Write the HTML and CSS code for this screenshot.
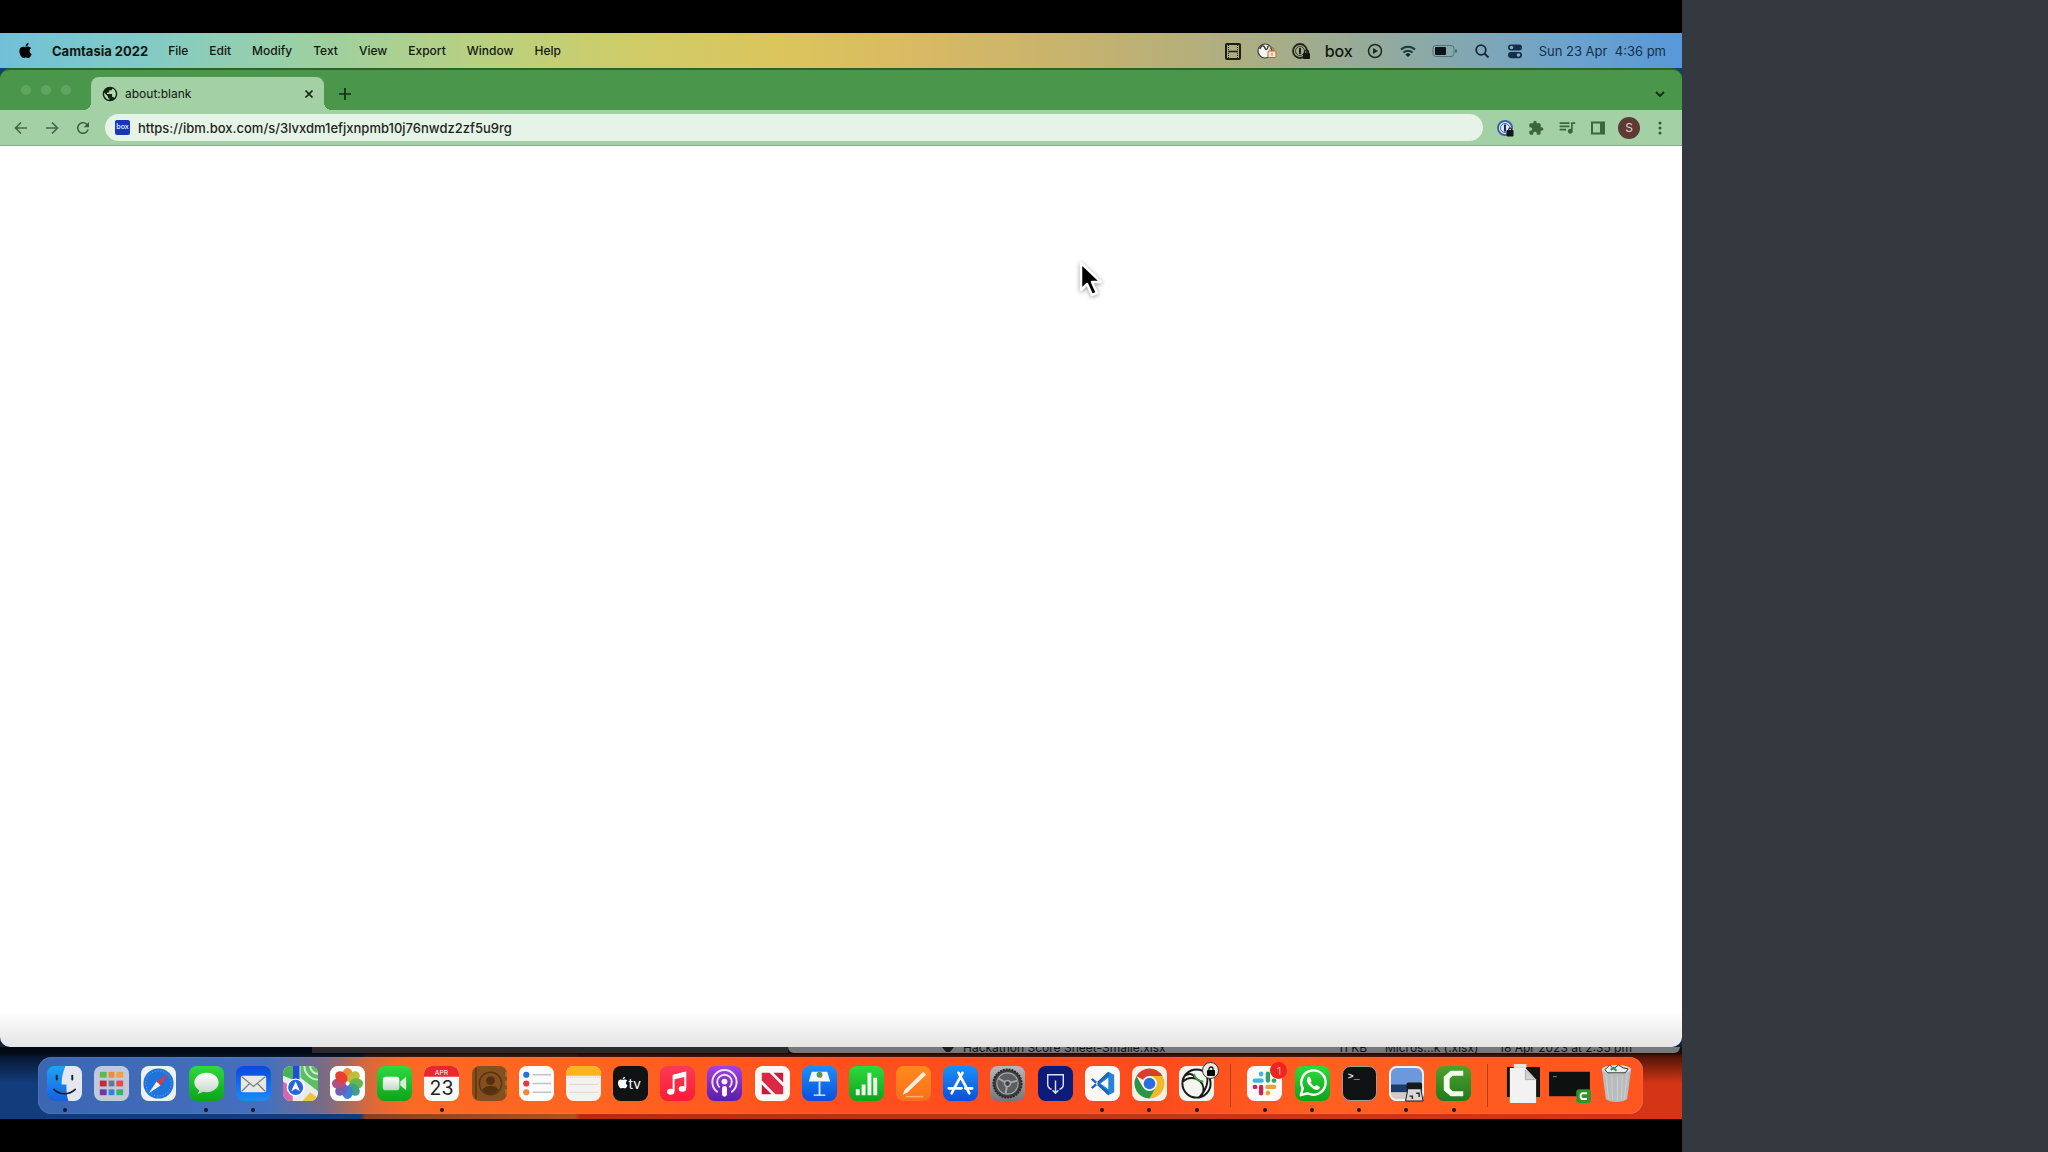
FILE: index.html
```
<!DOCTYPE html>
<html lang="en">
<head>
  <meta charset="UTF-8">
  <title>about:blank</title>
  <link rel="stylesheet" href="styles.css">
</head>
<body>
<svg class="defs" aria-hidden="true">
  <symbol id="apple" viewBox="0 0 24 24">
    <path d="M12.152 6.896c-.948 0-2.415-1.078-3.96-1.04-2.04.027-3.91 1.183-4.961 3.014-2.117 3.675-.546 9.103 1.519 12.09 1.013 1.454 2.208 3.09 3.792 3.039 1.52-.065 2.09-.987 3.935-.987 1.831 0 2.35.987 3.96.948 1.637-.026 2.676-1.48 3.676-2.948 1.156-1.688 1.636-3.325 1.662-3.415-.039-.013-3.182-1.221-3.22-4.857-.026-3.04 2.48-4.494 2.597-4.559-1.429-2.09-3.623-2.324-4.39-2.376-2-.156-3.675 1.09-4.61 1.09zM15.53 3.83c.843-1.012 1.4-2.427 1.245-3.83-1.207.052-2.662.805-3.532 1.818-.78.896-1.454 2.338-1.273 3.714 1.338.104 2.715-.688 3.559-1.701"/>
  </symbol>
  <linearGradient id="g-finder" x2="0" y2="1"><stop stop-color="#1fa4f4"/><stop offset="1" stop-color="#1560e0"/></linearGradient>
  <linearGradient id="g-green" x2="0" y2="1"><stop stop-color="#2fd93e"/><stop offset="1" stop-color="#0ba51a"/></linearGradient>
  <linearGradient id="g-blue" x2="0" y2="1"><stop stop-color="#0a48e0"/><stop offset="1" stop-color="#1c8cf4"/></linearGradient>
  <linearGradient id="g-blue2" x2="0" y2="1"><stop stop-color="#1a90f8"/><stop offset="1" stop-color="#0a50dc"/></linearGradient>
  <linearGradient id="g-red" x2="0" y2="1"><stop stop-color="#fb3a54"/><stop offset="1" stop-color="#f81c38"/></linearGradient>
  <linearGradient id="g-purple" x2="0" y2="1"><stop stop-color="#a044dc"/><stop offset="1" stop-color="#5a1cae"/></linearGradient>
  <linearGradient id="g-orange" x2="0" y2="1"><stop stop-color="#ff8a1c"/><stop offset="1" stop-color="#f8701a"/></linearGradient>
  <linearGradient id="g-grey" x2="0" y2="1"><stop stop-color="#b8b8b4"/><stop offset="1" stop-color="#77777a"/></linearGradient>
  <linearGradient id="g-camtasia" x2="0" y2="1"><stop stop-color="#52a02c"/><stop offset="1" stop-color="#1f7a1c"/></linearGradient>
  <linearGradient id="g-white" x2="0" y2="1"><stop stop-color="#ffffff"/><stop offset="1" stop-color="#c4d6c8"/></linearGradient>
  <clipPath id="tile"><rect width="36" height="36" rx="8"/></clipPath>
</svg>

<div class="stage">
  <main class="screen">

    <header class="menubar">
      <nav class="menus">
        <button class="apple" aria-label="Apple"><svg width="15" height="15"><use href="#apple"/></svg></button>
        <button class="app-name">Camtasia 2022</button>
        <button>File</button>
        <button>Edit</button>
        <button>Modify</button>
        <button>Text</button>
        <button>View</button>
        <button>Export</button>
        <button>Window</button>
        <button>Help</button>
      </nav>
      <div class="status">
        <svg width="18" height="18" viewBox="0 0 18 18" fill="none" stroke="#1d1f12"><rect x="2" y="2" width="14" height="15" rx="1" stroke-width="2"/><path d="M4.500 3v13M13.500 3v13" stroke-dasharray="1 1"/><path d="M4 9.500h10" stroke-width="1.500"/></svg>
        <svg width="20" height="18" viewBox="0 0 20 18"><circle cx="8" cy="9" r="7" fill="#f4f4f0" stroke="#3c3c38" stroke-width="1.200"/><path d="M3 7c1-4 4-4 5-1s3 1 3-2" fill="none" stroke="#3c3c38" stroke-width="1.500"/><rect x="11" y="9" width="8" height="6.500" rx="1" fill="#f4e4d0" stroke="#b8643c"/><path d="M13 9V7.500a2 2 0 0 1 4 0V9M15 11v2.500" fill="none" stroke="#b8643c"/></svg>
        <svg width="18" height="18" viewBox="0 0 18 18"><circle cx="8" cy="9" r="7" fill="none" stroke="#20241c" stroke-width="1.800"/><circle cx="8" cy="9" r="4.500" fill="none" stroke="#20241c" stroke-width=".8"/><path d="M8 6v6" stroke="#20241c" stroke-width="2"/><rect x="11" y="11" width="7" height="6" rx="1" fill="#14160f"/><path d="M12.500 11.500V10a2 2 0 0 1 4 0v1.500" fill="none" stroke="#14160f" stroke-width="1.200"/></svg>
        <span class="box-word">box</span>
        <svg width="18" height="18" viewBox="0 0 18 18"><circle cx="9" cy="9" r="6.500" fill="none" stroke="#20281f" stroke-width="1.500"/><path d="M7 6l5 3-5 3z" fill="#20281f"/></svg>
        <svg width="18" height="18" viewBox="0 0 18 18" fill="none" stroke="#1c3a3e" stroke-width="2"><path d="M2 7.500a10 10 0 0 1 14 0M4.500 10.500a6.500 6.500 0 0 1 9 0"/><path d="M9 15l-2.500-2.500a3.500 3.500 0 0 1 5 0z" fill="#0c1a1c" stroke="none"/></svg>
        <svg width="26" height="18" viewBox="0 0 26 18"><rect x="1" y="3.500" width="21" height="11" rx="3" fill="none" stroke="#54707a"/><rect x="3" y="5" width="11" height="8" rx="1" fill="#0c1418"/><path d="M24 7.500v3" stroke="#38505c" stroke-width="1.500"/></svg>
        <svg width="18" height="18" viewBox="0 0 18 18" fill="none" stroke="#14283a" stroke-width="1.800"><circle cx="8" cy="8" r="4.800"/><path d="M11.500 11.500L15.500 15.500"/></svg>
        <svg width="18" height="18" viewBox="0 0 18 18"><rect x="2" y="2.500" width="14" height="6" rx="3" fill="#12304a"/><circle cx="5.500" cy="5.500" r="1.800" fill="#7ea8c8"/><rect x="2.600" y="10.600" width="12.800" height="5" rx="2.500" fill="#12304a" stroke="#12304a" stroke-width="1.200"/><circle cx="12.500" cy="13" r="1.800" fill="#7ea8c8"/></svg>
        <time class="clock">Sun 23 Apr&nbsp; 4:36 pm</time>
      </div>
    </header>

    <section class="browser">
      <div class="tabstrip">
        <div class="lights"><i></i><i></i><i></i></div>
        <div class="tab">
          <svg width="16" height="16" viewBox="1 1 22 22"><circle cx="12" cy="12" r="9" fill="#b4dcb4"/><path fill="#10240f" d="M12 2C6.480 2 2 6.480 2 12s4.480 10 10 10 10-4.480 10-10S17.520 2 12 2zm-1 17.930c-3.950-.49-7-3.850-7-7.930 0-.62.08-1.210.21-1.790L9 15v1c0 1.100.9 2 2 2v1.930zm6.900-2.540c-.26-.81-1-1.390-1.900-1.390h-1v-3c0-.55-.45-1-1-1H8v-2h2c.55 0 1-.45 1-1V7h2c1.100 0 2-.9 2-2v-.41c2.930 1.190 5 4.060 5 7.410 0 2.080-.8 3.970-2.100 5.390z"/></svg>
          <span class="tab-title">about:blank</span>
          <button aria-label="Close tab"><svg width="10" height="10" viewBox="0 0 10 10"><path d="M1.500 1.500l7 7M8.500 1.500l-7 7" stroke="#12240f" stroke-width="1.700"/></svg></button>
        </div>
        <button class="new-tab" aria-label="New tab"><svg width="14" height="14" viewBox="0 0 14 14"><path d="M7 1v12M1 7h12" stroke="#102c10" stroke-width="1.700"/></svg></button>
        <button class="tab-search" aria-label="Search tabs"><svg width="12" height="12" viewBox="0 0 12 12"><path d="M2 4l4 4 4-4" fill="none" stroke="#102c10" stroke-width="1.800"/></svg></button>
      </div>

      <div class="toolbar">
        <button aria-label="Back"><svg width="18" height="18" viewBox="0 0 18 18"><path d="M15 9H4M9 3.500L3.500 9 9 14.500" fill="none" stroke="#45684a" stroke-width="1.700"/></svg></button>
        <button aria-label="Forward"><svg width="18" height="18" viewBox="0 0 18 18"><path d="M3 9h11M9 3.500l5.500 5.500L9 14.500" fill="none" stroke="#45684a" stroke-width="1.700"/></svg></button>
        <button aria-label="Reload"><svg width="18" height="18" viewBox="0 0 24 24" fill="#3d5e40"><path d="M17.650 6.350A7.958 7.958 0 0 0 12 4c-4.420 0-7.990 3.580-7.990 8s3.570 8 7.990 8c3.730 0 6.840-2.550 7.730-6h-2.080A5.990 5.990 0 0 1 12 18c-3.310 0-6-2.690-6-6s2.690-6 6-6c1.660 0 3.140.69 4.220 1.780L13 11h7V4l-2.350 2.350z"/></svg></button>
        <label class="omnibox">
          <span class="favicon">box</span>
          <input type="text" value="https://ibm.box.com/s/3lvxdm1efjxnpmb10j76nwdz2zf5u9rg" aria-label="Address" spellcheck="false">
        </label>
        <button aria-label="1Password"><svg width="18" height="18" viewBox="0 0 18 18"><circle cx="9" cy="9" r="7" fill="#eef4fc" stroke="#3c62a8" stroke-width="2"/><circle cx="9" cy="9" r="4.500" fill="none" stroke="#3c62a8"/><path d="M9 5.500v7" stroke="#1c2c54" stroke-width="2.200"/><rect x="10.500" y="11" width="7" height="6.500" rx="1" fill="#10141c"/><path d="M12.500 12v-1.500a1.500 1.500 0 0 1 3 0V12" fill="none" stroke="#10141c"/></svg></button>
        <button aria-label="Extensions"><svg width="16" height="16" viewBox="0 0 24 24" fill="#3f6440"><path d="M20.500 11H19V7c0-1.100-.9-2-2-2h-4V3.500C13 2.120 11.880 1 10.500 1S8 2.120 8 3.500V5H4c-1.100 0-1.990.9-1.990 2v3.800H3.500c1.490 0 2.700 1.210 2.700 2.700s-1.210 2.700-2.700 2.700H2V20c0 1.100.9 2 2 2h3.800v-1.500c0-1.490 1.210-2.700 2.700-2.700 1.490 0 2.700 1.210 2.700 2.700V22H17c1.100 0 2-.9 2-2v-4h1.500c1.380 0 2.500-1.120 2.500-2.500S21.880 11 20.500 11z"/></svg></button>
        <button aria-label="Media controls"><svg width="18" height="18" viewBox="1 2 22 22" fill="#3f6440"><path d="M15 6H3v2h12V6zm0 4H3v2h12v-2zM3 16h8v-2H3v2zM17 6v8.180c-.31-.11-.65-.18-1-.18-1.660 0-3 1.340-3 3s1.340 3 3 3 3-1.340 3-3V8h3V6h-5z"/></svg></button>
        <button aria-label="Side panel"><svg width="18" height="18" viewBox="0 0 18 18"><path d="M3 3.500h12v11H3z" fill="none" stroke="#3f6440" stroke-width="2"/><path d="M11 3h4v12h-4z" fill="#3f6440"/></svg></button>
        <button class="avatar" aria-label="Profile">S</button>
        <button aria-label="Menu"><svg width="18" height="18" viewBox="0 0 18 18" fill="#36593a"><circle cx="9" cy="4" r="1.500"/><circle cx="9" cy="9" r="1.500"/><circle cx="9" cy="14" r="1.500"/></svg></button>
      </div>

      <div class="page">
        <svg class="cursor" width="28" height="40" viewBox="0 0 28 40"><path d="M4 3v27l6-6 5 11 5-2-5-11h9z" fill="#000" stroke="#fff" stroke-width="2.500" stroke-linejoin="round"/></svg>
      </div>
    </section>

    <div class="desktop">
      <!-- edges of the windows behind the browser -->
      <div class="behind">
        <div class="dark-window"></div>
        <div class="finder-window">
          <svg width="12" height="6" viewBox="0 0 12 6"><path d="M0 0h12L8 5H4z" fill="#1c1c1c"/></svg>
          <span class="file-name">Hackathon Score Sheet-Smalle.xlsx</span>
          <span class="file-size">11 KB</span>
          <span class="file-kind">Micros...k (.xlsx)</span>
          <span class="file-date">18 Apr 2023 at 2:35 pm</span>
        </div>
      </div>

      <nav class="dock">
        <button class="running" aria-label="Finder"><svg viewBox="0 0 36 36"><g clip-path="url(#tile)"><path fill="url(#g-finder)" d="M0 0h36v36H0z"/><path d="M19 0c-3 7-4 13-4 19h5c0 6 0 11 2 17h14V0z" fill="#e4e8ee"/></g><path d="M10 10v4M26 10v4" stroke="#10202c" stroke-width="2" stroke-linecap="round"/><path d="M7 24c6 6 16 6 22 0" fill="none" stroke="#10202c" stroke-width="1.600" stroke-linecap="round"/></svg></button>
        <button aria-label="Launchpad"><svg viewBox="0 0 36 36"><rect width="36" height="36" rx="8" fill="#c3c9dc"/><path fill="#5cba4c" d="M6 6h7v6H6z"/><path fill="#f08c34" d="M15 6h6v6h-6z"/><path fill="#f0a03c" d="M23 6h7v6h-7z"/><path fill="#c02c38" d="M6 15h7v6H6z"/><path fill="#5c7c94" d="M15 15h6v6h-6z"/><path fill="#e84848" d="M23 15h7v6h-7z"/><path fill="#6c38a8" d="M6 24h7v6H6z"/><path fill="#2c84dc" d="M15 24h6v6h-6z"/><path fill="#38b070" d="M23 24h7v6h-7z"/></svg></button>
        <button aria-label="Safari"><svg viewBox="0 0 36 36"><rect width="36" height="36" rx="8" fill="#eef0f4"/><circle cx="18" cy="18" r="15.500" fill="#1f74dc"/><circle cx="18" cy="18" r="13" fill="none" stroke="#7cb8f0" stroke-dasharray="1 2"/><path d="M28 8L16 16l4 4z" fill="#e4343c"/><path d="M8 28l8-12 4 4z" fill="#f4f4f4"/></svg></button>
        <button class="running" aria-label="Messages"><svg viewBox="0 0 36 36"><rect width="36" height="36" rx="8" fill="url(#g-green)"/><path d="M18 7c-7 0-12.500 4.500-12.500 10 0 3.500 2 6 5 8 0 1.500-1 2.500-2 3.500 2.500 0 4-1 5.500-2 1.300.3 2.600.5 4 .5 7 0 12.500-4.500 12.500-10S25 7 18 7z" fill="url(#g-white)"/></svg></button>
        <button class="running" aria-label="Mail"><svg viewBox="0 0 36 36"><rect width="36" height="36" rx="8" fill="url(#g-blue)"/><rect x="5" y="10" width="26" height="17" rx="2" fill="#e8e8e6"/><path d="M6 11l12 10 12-10M6 26l8-8M30 26l-8-8" fill="none" stroke="#7c8084" stroke-width="1.300"/></svg></button>
        <button aria-label="Maps"><svg viewBox="0 0 36 36"><g clip-path="url(#tile)"><path fill="#e8ece8" d="M0 0h36v36H0z"/><path d="M18 0h18v26L18 12z" fill="#58c060"/><path d="M0 0h10v14L0 10z" fill="#46b454"/><path d="M22 0a14 14 0 0 0 14 14M28 0a8 8 0 0 0 8 8" fill="none" stroke="#d4ecd4" stroke-width="2"/><path d="M0 16l10 6v14H0z" fill="#d468b0"/><path d="M20 36l8-9 8 6v3z" fill="#ecc440"/><path d="M10 0h7v18h-7z" fill="#1c50cc"/></g><circle cx="13" cy="22" r="8.500" fill="#2466dc" stroke="#fff" stroke-width="1.500"/><path d="M13 16l4.500 10-4.500-2.500L8.500 26z" fill="#fff"/></svg></button>
        <button aria-label="Photos"><svg viewBox="0 0 36 36"><rect width="36" height="36" rx="8" fill="#fff"/><g transform="translate(18 18)" opacity=".9"><ellipse cy="-9" rx="5.500" ry="7" fill="#f08020"/><ellipse cy="-9" rx="5.500" ry="7" fill="#b4b824" transform="rotate(45)"/><ellipse cy="-9" rx="5.500" ry="7" fill="#58b038" transform="rotate(90)"/><ellipse cy="-9" rx="5.500" ry="7" fill="#2c9878" transform="rotate(135)"/><ellipse cy="-9" rx="5.500" ry="7" fill="#2c70d0" transform="rotate(180)"/><ellipse cy="-9" rx="5.500" ry="7" fill="#5c50b0" transform="rotate(225)"/><ellipse cy="-9" rx="5.500" ry="7" fill="#a83c78" transform="rotate(270)"/><ellipse cy="-9" rx="5.500" ry="7" fill="#e42c20" transform="rotate(315)"/></g></svg></button>
        <button aria-label="FaceTime"><svg viewBox="0 0 36 36"><rect width="36" height="36" rx="8" fill="url(#g-green)"/><rect x="6" y="11" width="17" height="14" rx="3" fill="url(#g-white)"/><path d="M24 16l6-5v14l-6-5z" fill="#d8ecd8"/></svg></button>
        <button class="running" aria-label="Calendar"><svg viewBox="0 0 36 36"><g clip-path="url(#tile)"><path fill="#fafafa" d="M0 0h36v36H0z"/><path fill="#e8282c" d="M0 0h36v11H0z"/></g><text class="cal-month" x="18" y="9">APR</text><text class="cal-day" x="18" y="30">23</text></svg></button>
        <button aria-label="Contacts"><svg viewBox="0 0 36 36"><rect width="36" height="36" rx="8" fill="#84501f"/><path d="M4 2v32" stroke="#643a14" stroke-width="2"/><circle cx="19" cy="18" r="11.500" fill="none" stroke="#5c3410" stroke-width="1.500"/><circle cx="19" cy="15" r="4.500" fill="#553010"/><path d="M11 25c1-6 15-6 16 0-4 5-12 5-16 0z" fill="#553010"/><path d="M35 6v5M35 15v5M35 24v5" stroke="#c88c40"/></svg></button>
        <button aria-label="Reminders"><svg viewBox="0 0 36 36"><rect width="36" height="36" rx="8" fill="#fbfbfb"/><circle cx="7.500" cy="9" r="3.200" fill="#2470dc"/><circle cx="7.500" cy="18" r="3.200" fill="#dc3c48"/><circle cx="7.500" cy="27" r="3.200" fill="#f08440"/><path d="M14 9h19M14 18h19M14 27h19" stroke="#c0c2c6" stroke-width="1.300"/></svg></button>
        <button aria-label="Notes"><svg viewBox="0 0 36 36"><g clip-path="url(#tile)"><path fill="#f4f2ee" d="M0 0h36v36H0z"/><path fill="#fcb41c" d="M0 0h36v10H0z"/><path d="M0 11.500h36" stroke="#d4cfc4" stroke-dasharray="1 1"/><path d="M3 19h30M3 27h30" stroke="#d8d8d6"/></g></svg></button>
        <button aria-label="TV"><svg viewBox="0 0 36 36"><rect width="36" height="36" rx="8" fill="#111214"/><use href="#apple" x="4" y="10" width="12" height="14" fill="#fff"/><text class="tv-word" x="16" y="24">tv</text></svg></button>
        <button aria-label="Music"><svg viewBox="0 0 36 36"><rect width="36" height="36" rx="8" fill="url(#g-red)"/><path d="M14 26V10l12-3v16" fill="none" stroke="#fff" stroke-width="2"/><path d="M14 9l12-3v5l-12 3z" fill="#fff"/><ellipse cx="11" cy="26.500" rx="3.800" ry="3" fill="#fff"/><ellipse cx="23" cy="23.500" rx="3.800" ry="3" fill="#fff"/></svg></button>
        <button aria-label="Podcasts"><svg viewBox="0 0 36 36"><rect width="36" height="36" rx="8" fill="url(#g-purple)"/><g fill="none" stroke="#f0e4fc" stroke-width="2"><path d="M11 27a12.500 12.500 0 1 1 14 0"/><path d="M13 22a7.500 7.500 0 1 1 10 0"/></g><circle cx="18" cy="16" r="3" fill="#fff"/><rect x="15.500" y="20.500" width="5" height="11" rx="2.500" fill="#fff"/></svg></button>
        <button aria-label="News"><svg viewBox="0 0 36 36"><rect width="36" height="36" rx="8" fill="#fdf8f6"/><path d="M7 7h8l14 14v8h-8L7 15z" fill="#dc2844"/><path d="M19 7h10v10zM7 19v10h10z" fill="#c81c3c"/></svg></button>
        <button aria-label="Keynote"><svg viewBox="0 0 36 36"><rect width="36" height="36" rx="8" fill="url(#g-blue2)"/><path d="M10 6h16l3 10H7z" fill="#f4f6fa"/><circle cx="18" cy="9" r="3" fill="#38a45c"/><path d="M18 9l3 0a3 3 0 0 1-3 3z" fill="#e85c34"/><path d="M18 16v14" stroke="#d4e0f4" stroke-width="2"/><path d="M12 30h12" stroke="#d4e0f4" stroke-width="1.500"/></svg></button>
        <button aria-label="Numbers"><svg viewBox="0 0 36 36"><rect width="36" height="36" rx="8" fill="url(#g-green)"/><path d="M7 24h4v6H7zM13 19h4v11h-4zM19 7h4v23h-4zM25 12h4v18h-4z" fill="#f0fcf0"/></svg></button>
        <button aria-label="Pages"><svg viewBox="0 0 36 36"><rect width="36" height="36" rx="8" fill="url(#g-orange)"/><path d="M28 6l3 3-19 18-5 2.500 2-5z" fill="#fbeee0"/><path d="M10 31.500h18" stroke="#fcb078" stroke-width="1.500"/></svg></button>
        <button aria-label="App Store"><svg viewBox="0 0 36 36"><rect width="36" height="36" rx="8" fill="url(#g-blue2)"/><path d="M20 7L9 28M16 7l11 21M6 23h13M23 23h7" fill="none" stroke="#fff" stroke-width="2.800" stroke-linecap="round"/></svg></button>
        <button aria-label="System Settings"><svg viewBox="0 0 36 36"><rect width="36" height="36" rx="8" fill="url(#g-grey)"/><circle cx="18" cy="18" r="14.500" fill="#3c3e42" stroke="#26282a" stroke-width="2" stroke-dasharray="2 1"/><circle cx="18" cy="18" r="11" fill="#5c5e62" stroke="#a4a6a8" stroke-width="1.200"/><path d="M18 18L9 13M18 18l10-3M18 18l-2 10" stroke="#a4a6a8" stroke-width="2"/><circle cx="18" cy="18" r="3" fill="#3c3e42" stroke="#a4a6a8" stroke-width="1.500"/></svg></button>
        <button aria-label="Guard"><svg viewBox="0 0 36 36"><rect width="36" height="36" rx="8" fill="#0c1a78"/><path d="M14 24c-3-1-4-2-4-5V9h16v10c0 3-1 4-4 5M18 15v13M15 25l3 3 3-3" fill="none" stroke="#dce0f8" stroke-width="1.500"/></svg></button>
        <button class="running" aria-label="Visual Studio Code"><svg viewBox="0 0 36 36"><rect width="36" height="36" rx="8" fill="#fdf8f4"/><path d="M24 6l6 3v18l-6 3-12-12z" fill="#2484d8"/><path d="M24 12v12l-8-6z" fill="#fdf8f4"/><path d="M6 14l2-1.500L25 27l-1 3zM6 22l2 1.500L25 9l-1-3z" fill="#1c64b8"/></svg></button>
        <button class="running" aria-label="Google Chrome"><svg viewBox="0 0 36 36"><rect width="36" height="36" rx="8" fill="#f6efe2"/><path d="M18 18L4.600 10.300A15.500 15.500 0 0 1 31.400 10.300L18 10.300z" fill="#dc3c30"/><path d="M18 10.300h13.400A15.500 15.500 0 0 1 18 33.500L24.700 21.800z" fill="#f4b828"/><path d="M4.600 10.300A15.500 15.500 0 0 0 18 33.500l6.700-11.700H11.300z" fill="#2c9448"/><circle cx="18" cy="18" r="7.700" fill="#f8f8f4"/><circle cx="18" cy="18" r="6" fill="#2c6ce4"/></svg></button>
        <button class="running" aria-label="Cisco Secure Client"><svg viewBox="0 0 36 36"><rect width="36" height="36" rx="8" fill="#f6f4ee"/><g fill="none" stroke="#181a18" stroke-width="2"><circle cx="18" cy="18" r="14.500"/><path d="M4 16c5-5 13-5 18 0 4 4 4 10 1 15M28 8c3 8 0 17-7 24M6 10c4-3 8-2 10 1"/></g><path d="M15 8c2 5 6 8 10 8" fill="none" stroke="#3c9848" stroke-width="2"/></svg><span class="badge lock"><svg width="10" height="10" viewBox="0 0 10 10"><rect x="1" y="4" width="8" height="6" rx="1"/><path d="M3 5V3a2 2 0 0 1 4 0v2" fill="none" stroke="#111" stroke-width="1.300"/></svg></span></button>
        <hr>
        <button class="running" aria-label="Slack"><svg viewBox="0 0 36 36"><rect width="36" height="36" rx="8" fill="#fdfaf8"/><g fill="none" stroke-width="4.500" stroke-linecap="round"><path d="M8 15h7M14.500 8v.5" stroke="#38b8dc"/><path d="M21.500 8v7M28 15h-.500" stroke="#2ca470"/><path d="M28 21.500h-7M21.500 28v-.500" stroke="#e8a434"/><path d="M14.500 28v-6.500M8 21.500h.5" stroke="#cc2450"/></g></svg><span class="badge count">1</span></button>
        <button class="running" aria-label="WhatsApp"><svg viewBox="0 0 36 36"><rect width="36" height="36" rx="8" fill="url(#g-green)"/><path d="M6 30l2-7a12.500 12.500 0 1 1 5 5z" fill="none" stroke="#fff" stroke-width="2.500" stroke-linejoin="round"/><path d="M14 11c-3 2-2 6 1.500 9.500S23 26 25 23.500c1-1.500.6-2-.4-2.600l-2.200-1.100c-.8-.3-1 .1-1.900 1.200-2-.8-3.600-2.300-4.500-4.200.9-.9 1.200-1.300.8-2.200l-1-2.400c-.4-.9-.8-1.400-1.800-1.200z" fill="#fff"/></svg></button>
        <button class="running" aria-label="Terminal"><svg viewBox="0 0 36 36"><rect x=".5" y=".5" width="35" height="35" rx="8" fill="#111214" stroke="#a8a09c"/><text class="prompt" x="6" y="13">&gt;_</text></svg></button>
        <button class="running" aria-label="Preview"><svg viewBox="0 0 36 36"><g clip-path="url(#tile)"><path fill="#6c98dc" d="M0 0h36v36H0z"/><path d="M0 19h36v8H0z" fill="#1c3c6c"/><path d="M0 27h36v9H0z" fill="#d4ccbc"/></g><rect x="1" y="1" width="34" height="34" rx="7" fill="none" stroke="#f0f0f0" stroke-width="2"/><path d="M19 19h14v6l2 11H17l2-10z" fill="#d8d8d8" stroke="#16181a"/><rect x="18" y="17" width="16" height="7" rx="2" fill="#16181a"/><path d="M21 31h3v3M28 28h3v4" fill="none" stroke="#26282a" stroke-width="1.500"/></svg></button>
        <button class="running" aria-label="Camtasia"><svg viewBox="0 0 36 36"><rect width="36" height="36" rx="8" fill="url(#g-camtasia)"/><path d="M28 5v5H17l-3 3v10l3 3h11v5H15l-7-6V11l7-6z" fill="#f4fcf0"/></svg></button>
        <hr>
        <button aria-label="Document"><svg viewBox="0 0 36 36"><path d="M2 1h34v31H2z" fill="#141414"/><path d="M9-2h13v4H9z" fill="#e8e8e8"/><path d="M5 2h16l11 12v24H5z" fill="#f2f2f2"/><path d="M21 4v10h10z" fill="#d4d4d4" stroke="#888" stroke-width=".6"/></svg></button>
        <button class="wide" aria-label="Minimised window"><svg viewBox="0 0 42 36"><path d="M0 6h42v25H0z" fill="#0c1210"/><path d="M4 11h4" stroke="#58a060"/><rect x="28" y="24" width="15" height="14" rx="3" fill="#2f9428"/><path d="M39 28h-5l-1.500 1.500v3L34 34h5" fill="none" stroke="#fff" stroke-width="2"/></svg></button>
        <button aria-label="Bin"><svg viewBox="0 0 36 36"><path d="M3 3h30l-4 31c-4 4-18 4-22 0z" fill="#b9bcbd"/><path d="M7 8l3 26M13 10l1 25M19 10v26M24 10l-1 25M29 8l-3 26" stroke="#c9cccc" stroke-width="1.300"/><ellipse cx="18" cy="3.500" rx="15" ry="4.500" fill="#d8dcdc"/><path d="M6 4l5-5 4 4 5-4 5 3 5 1-3 4H9z" fill="#eceeee" stroke="#28342e"/><path d="M12 4l3-2 3 3" fill="none" stroke="#2c9060" stroke-width="2"/></svg></button>
      </nav>
    </div>

  </main>
</div>
</body>
</html>
```
FILE: styles.css
```
* {
  box-sizing: border-box;
  margin: 0;
  padding: 0;
}
body {
  background: #343940;
  font-family: Inter, "Liberation Sans", sans-serif;
  font-size: 13px;
  color: #10180f;
}
button {
  display: flex;
  align-items: center;
  justify-content: center;
  border: 0;
  background: none;
  font: inherit;
  color: inherit;
}
svg {
  display: block;
  flex: none;
}
.defs {
  position: absolute;
  width: 0;
  height: 0;
}
.stage {
  display: grid;
  grid-template-columns: 1fr 366px;
  min-height: 100vh;
}
.screen {
  display: flex;
  flex-direction: column;
  min-width: 0;
  padding: 33px 0;
  background: #000;
}

/* menu bar */
.menubar {
  display: flex;
  align-items: center;
  justify-content: space-between;
  height: 35px;
  padding: 0 16px 0 18px;
  background: linear-gradient(90deg, #70c0d8, #82cac8 8%, #9bd0a4 18%, #bad080 29%, #d0cc68 38%, #dcc45c 47%, #d8b964 55%, #c4b270 65%, #aaad84 75%, #8aa9a8 85%, #6ea3cc 93%, #5898d8);
}
.menus,
.status {
  display: flex;
  align-items: center;
}
.menus {
  gap: 19px;
}
.menus button {
  font-weight: 500;
  font-size: 12px;
  padding: 0 1px;
}
.menus .apple {
  padding: 0;
}
.menus .app-name {
  font-size: 13px;
  font-weight: 700;
  padding: 0;
}
.status {
  gap: 15px;
}
.box-word {
  width: 26px;
  font-size: 16px;
  line-height: 18px;
  font-weight: 500;
}
.clock {
  color: #12304c;
}

/* browser */
.browser {
  display: flex;
  flex: 1;
  flex-direction: column;
  background: linear-gradient(#123f6c 0 20px, #102040 20px);
}
.tabstrip {
  display: flex;
  align-items: flex-end;
  height: 42px;
  padding: 0 16px 0 21px;
  border-top: 2px solid #2c6428;
  border-radius: 10px 10px 0 0;
  background: #4a974c;
}
.lights {
  display: flex;
  gap: 10px;
  align-self: center;
  margin-right: 20px;
}
.lights i {
  width: 10px;
  height: 10px;
  border-radius: 50%;
  background: #62a462;
}
.tab {
  position: relative;
  display: flex;
  align-items: center;
  gap: 7px;
  width: 233px;
  height: 33px;
  padding: 0 10px 0 11px;
  border-radius: 8px 8px 0 0;
  background: #a3d0a4;
  font-size: 12px;
}
.tab::before,
.tab::after {
  content: "";
  position: absolute;
  bottom: 0;
  width: 8px;
  height: 8px;
}
.tab::before {
  right: 100%;
  background: radial-gradient(circle at 0 0, #4a974c 8px, #a3d0a4 8px);
}
.tab::after {
  left: 100%;
  background: radial-gradient(circle at 100% 0, #4a974c 8px, #a3d0a4 8px);
}
.tab-title {
  flex: 1;
}
.new-tab,
.tab-search {
  height: 33px;
}
.new-tab {
  margin-left: 14px;
}
.tab-search {
  margin-left: auto;
}
.toolbar {
  display: flex;
  align-items: center;
  gap: 13px;
  height: 36px;
  padding: 0 13px 0 12px;
  border-bottom: 1px solid #86aa88;
  background: #a3d0a4;
}
.toolbar > button {
  width: 18px;
  height: 22px;
}
.omnibox {
  display: flex;
  flex: 1;
  align-items: center;
  gap: 8px;
  height: 27px;
  padding: 0 10px;
  border-radius: 14px;
  background: #e6f4e7;
}
.favicon {
  width: 15px;
  height: 15px;
  border-radius: 2px;
  background: #1a36b8;
  color: #dce4ff;
  font-size: 7px;
  line-height: 14px;
  font-weight: 600;
  text-align: center;
}
.omnibox input {
  flex: 1;
  border: 0;
  outline: 0;
  background: none;
  font: inherit;
  font-weight: 500;
  color: #1c261d;
}
.toolbar > .avatar {
  width: 22px;
  margin: 0 -2px;
  border-radius: 50%;
  background: #5d3a33;
  color: #e8d4cc;
  font-size: 12px;
}
.page {
  position: relative;
  flex: 1;
  border-radius: 0 0 10px 10px;
  background: linear-gradient(transparent calc(100% - 36px), #e4e4e4) #fff;
}
.cursor {
  position: absolute;
  top: 114px;
  left: 1077px;
  filter: drop-shadow(0 1px 2px rgba(0, 0, 0, .4));
}

/* desktop strip and dock */
.desktop {
  height: 72px;
  padding-bottom: 5px;
  background:
    linear-gradient(rgba(0, 0, 0, .85) 6px, rgba(0, 0, 0, .6) 10px, transparent 36px),
    linear-gradient(90deg, #123c7c 360px, #8a4022 366px, #b0501e 575px, #b42c10 580px, #c4381a 1250px, #d43414);
}
.behind {
  display: flex;
  height: 6px;
  margin: 0 2px 4px 312px;
  overflow: hidden;
}
.dark-window {
  width: 476px;
  background: #2c2a2a;
}
.finder-window {
  display: flex;
  flex: 1;
  gap: 9px;
  padding-left: 154px;
  border-radius: 0 0 8px 8px;
  background: #77787c;
  font-size: 12px;
  line-height: 2px;
  color: #111;
  white-space: nowrap;
}
.file-name {
  flex: 1;
}
.file-size {
  width: 38px;
}
.file-kind {
  width: 105px;
}
.file-date {
  width: 181px;
}
.dock {
  display: flex;
  align-items: flex-start;
  justify-content: space-between;
  height: 57px;
  margin: 0 39px 0 38px;
  padding: 9px;
  border-radius: 14px;
  background: linear-gradient(90deg, #3b66b4, #4670be 230px, #7e6c80 290px, #d8693c 330px, #fa6a24 370px, #ff6420 560px, #ff4f1e 50%, #fc4c1e 70%, #ff6020 80%, #ff561f);
  box-shadow: inset 0 0 1px rgba(255, 255, 255, .6);
}
.dock button {
  position: relative;
  width: 35px;
  height: 35px;
}
.dock button > svg {
  width: 100%;
  height: 100%;
  overflow: visible;
}
.dock .wide > svg {
  width: 41px;
}
.dock .running::after {
  content: "";
  position: absolute;
  bottom: -11px;
  left: 50%;
  width: 4px;
  height: 4px;
  margin-left: -2px;
  border-radius: 50%;
  background: #1c1422;
}
.dock hr {
  width: 1px;
  height: 43px;
  margin: -2px 4px 0;
  border: 0;
  background: #b04020;
}
.badge {
  position: absolute;
  top: -4px;
  right: -5px;
  display: flex;
  align-items: center;
  justify-content: center;
  width: 17px;
  height: 17px;
  border-radius: 50%;
  font-size: 11px;
}
.lock {
  border: 1px solid #333;
  background: #e4eae4;
}
.count {
  background: #ec2424;
  color: #ffa08c;
}
.cal-month,
.cal-day {
  text-anchor: middle;
}
.cal-month {
  font-size: 7px;
  fill: #fff;
}
.cal-day {
  font-size: 20px;
  fill: #222;
}
.tv-word {
  font-size: 14px;
  fill: #fff;
}
.prompt {
  font-family: "Liberation Mono", monospace;
  font-size: 10px;
  font-weight: 700;
  fill: #e8e8e8;
}
```
